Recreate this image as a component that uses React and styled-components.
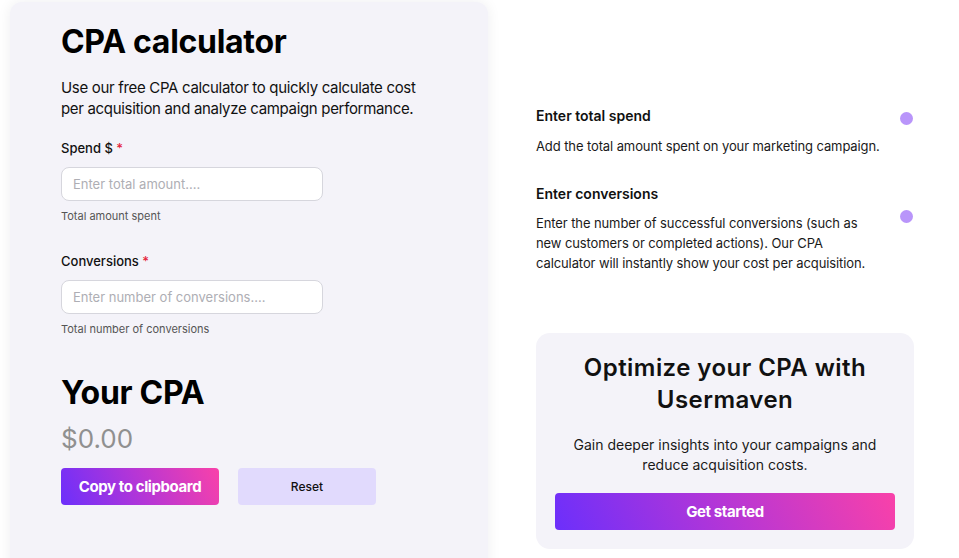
import React from "react";
import styled, { createGlobalStyle } from "styled-components";

const GlobalStyle = createGlobalStyle`
  * {
    box-sizing: border-box;
  }
  body {
    margin: 0;
    background: #fff;
    font-family: Inter, "Noto Sans", sans-serif;
    color: #111;
    overflow: hidden;
  }
`;

const steps = [
  {
    title: "Enter total spend",
    text: "Add the total amount spent on your marketing campaign.",
  },
  {
    title: "Enter conversions",
    text:
      "Enter the number of successful conversions (such as new customers or completed actions). Our CPA calculator will instantly show your cost per acquisition.",
  },
];

function App() {
  return (
    <>
      <GlobalStyle />
      <Page>
        <CalcPanel>
          <Title>CPA calculator</Title>
          <Intro>
            Use our free CPA calculator to quickly calculate cost per
            acquisition and analyze campaign performance.
          </Intro>

          <Field>
            <Label>
              Spend $ <Req>*</Req>
            </Label>
            <Input placeholder="Enter total amount...." />
            <Help>Total amount spent</Help>
          </Field>

          <Field>
            <Label>
              Conversions <Req>*</Req>
            </Label>
            <Input placeholder="Enter number of conversions...." />
            <Help>Total number of conversions</Help>
          </Field>

          <ResultTitle>Your CPA</ResultTitle>
          <ResultValue>$0.00</ResultValue>

          <Actions>
            <GradientButton $width="158px">Copy to clipboard</GradientButton>
            <ResetButton>Reset</ResetButton>
          </Actions>
        </CalcPanel>

        <Side>
          <StepsRow>
            <StepList>
              {steps.map((s) => (
                <Step key={s.title}>
                  <StepTitle>{s.title}</StepTitle>
                  <StepText>{s.text}</StepText>
                </Step>
              ))}
            </StepList>
            <Dots>
              <Dot />
              <Dot />
            </Dots>
          </StepsRow>

          <PromoCard>
            <PromoTitle>Optimize your CPA with Usermaven</PromoTitle>
            <PromoText>
              Gain deeper insights into your campaigns and reduce acquisition
              costs.
            </PromoText>
            <GradientButton $width="100%">Get started</GradientButton>
          </PromoCard>
        </Side>
      </Page>
    </>
  );
}

export default App;

/* --------------- LAYOUT ---------------- */

const Page = styled.div`
  display: flex;
  align-items: flex-start;
  gap: 48px;
  padding: 2px 0 0 10px;
  height: 558px;
`;

const CalcPanel = styled.section`
  width: 478px;
  min-height: 600px;
  flex-shrink: 0;
  background: #f4f3f9;
  border-radius: 12px;
  box-shadow: 0 0 14px rgba(20, 20, 40, 0.07);
  padding: 21px 51px;
  display: flex;
  flex-direction: column;
`;

const Title = styled.h1`
  margin: 0;
  font-size: 32px;
  line-height: 1.2;
  font-weight: 700;
  color: #000;
  letter-spacing: -0.3px;
`;

const Intro = styled.p`
  margin: 16px 0 20px;
  font-size: 15px;
  line-height: 21px;
  color: #111;
  letter-spacing: -0.32px;
`;

const Field = styled.div`
  display: flex;
  flex-direction: column;
  margin-bottom: 28px;
`;

const Label = styled.label`
  font-size: 13px;
  line-height: 18px;
  font-weight: 500;
  color: #111;
  margin-bottom: 10px;
`;

const Req = styled.span`
  color: #e5243b;
`;

const Input = styled.input`
  width: 262px;
  height: 34px;
  border: 1px solid #d6d6dd;
  border-radius: 8px;
  background: #fff;
  padding: 0 11px;
  font-family: inherit;
  font-size: 13px;
  color: #111;
  outline: none;
  &::placeholder {
    color: #aeaeb4;
  }
`;

const Help = styled.span`
  margin-top: 8px;
  font-size: 11px;
  line-height: 15px;
  color: #555;
`;

const ResultTitle = styled.h2`
  margin: 9px 0 0;
  font-size: 32px;
  line-height: 1.2;
  font-weight: 700;
  color: #000;
  letter-spacing: -0.3px;
`;

const ResultValue = styled.div`
  margin-top: 10px;
  font-size: 26px;
  line-height: 1.2;
  color: #909090;
`;

const Actions = styled.div`
  display: flex;
  gap: 19px;
  margin-top: 14px;
`;

const GradientButton = styled.button`
  width: ${(p) => p.$width};
  height: 37px;
  border: none;
  border-radius: 4px;
  background: linear-gradient(65deg, #6c2ffb 0%, #b536d6 50%, #f941a9 100%);
  color: #fff;
  font-family: inherit;
  font-size: 15px;
  font-weight: 700;
  letter-spacing: -0.4px;
  cursor: pointer;
`;

const ResetButton = styled.button`
  width: 138px;
  height: 37px;
  border: none;
  border-radius: 4px;
  background: #e1dafd;
  color: #111;
  font-family: inherit;
  font-size: 12px;
  font-weight: 500;
  cursor: pointer;
`;

/* --------------- SIDE ---------------- */

const Side = styled.aside`
  width: 378px;
  padding-top: 104px;
  display: flex;
  flex-direction: column;
  gap: 60px;
`;

const StepsRow = styled.div`
  display: flex;
  justify-content: space-between;
`;

const StepList = styled.div`
  width: 346px;
  display: flex;
  flex-direction: column;
  gap: 28px;
`;

const Step = styled.div`
  display: flex;
  flex-direction: column;
  gap: 10px;
`;

const StepTitle = styled.h3`
  margin: 0;
  font-size: 14px;
  line-height: 19.6px;
  font-weight: 600;
  color: #111;
`;

const StepText = styled.p`
  margin: 0;
  font-size: 13px;
  line-height: 20px;
  color: #1a1a1a;
  letter-spacing: -0.1px;
`;

const Dots = styled.div`
  display: flex;
  flex-direction: column;
  gap: 85px;
  padding-top: 6px;
  margin-right: 1px;
`;

const Dot = styled.span`
  width: 13px;
  height: 13px;
  border-radius: 50%;
  background: #b995fa;
`;

const PromoCard = styled.div`
  background: #f4f3f9;
  border-radius: 14px;
  padding: 19px;
  display: flex;
  flex-direction: column;
  align-items: center;
  gap: 19px;
  text-align: center;
`;

const PromoTitle = styled.h2`
  margin: 0;
  font-size: 24px;
  line-height: 32px;
  font-weight: 600;
  color: #111;
  letter-spacing: 0.45px;
  max-width: 310px;
`;

const PromoText = styled.p`
  margin: 0;
  font-size: 14px;
  line-height: 19.6px;
  color: #1a1a1a;
  max-width: 320px;
`;
